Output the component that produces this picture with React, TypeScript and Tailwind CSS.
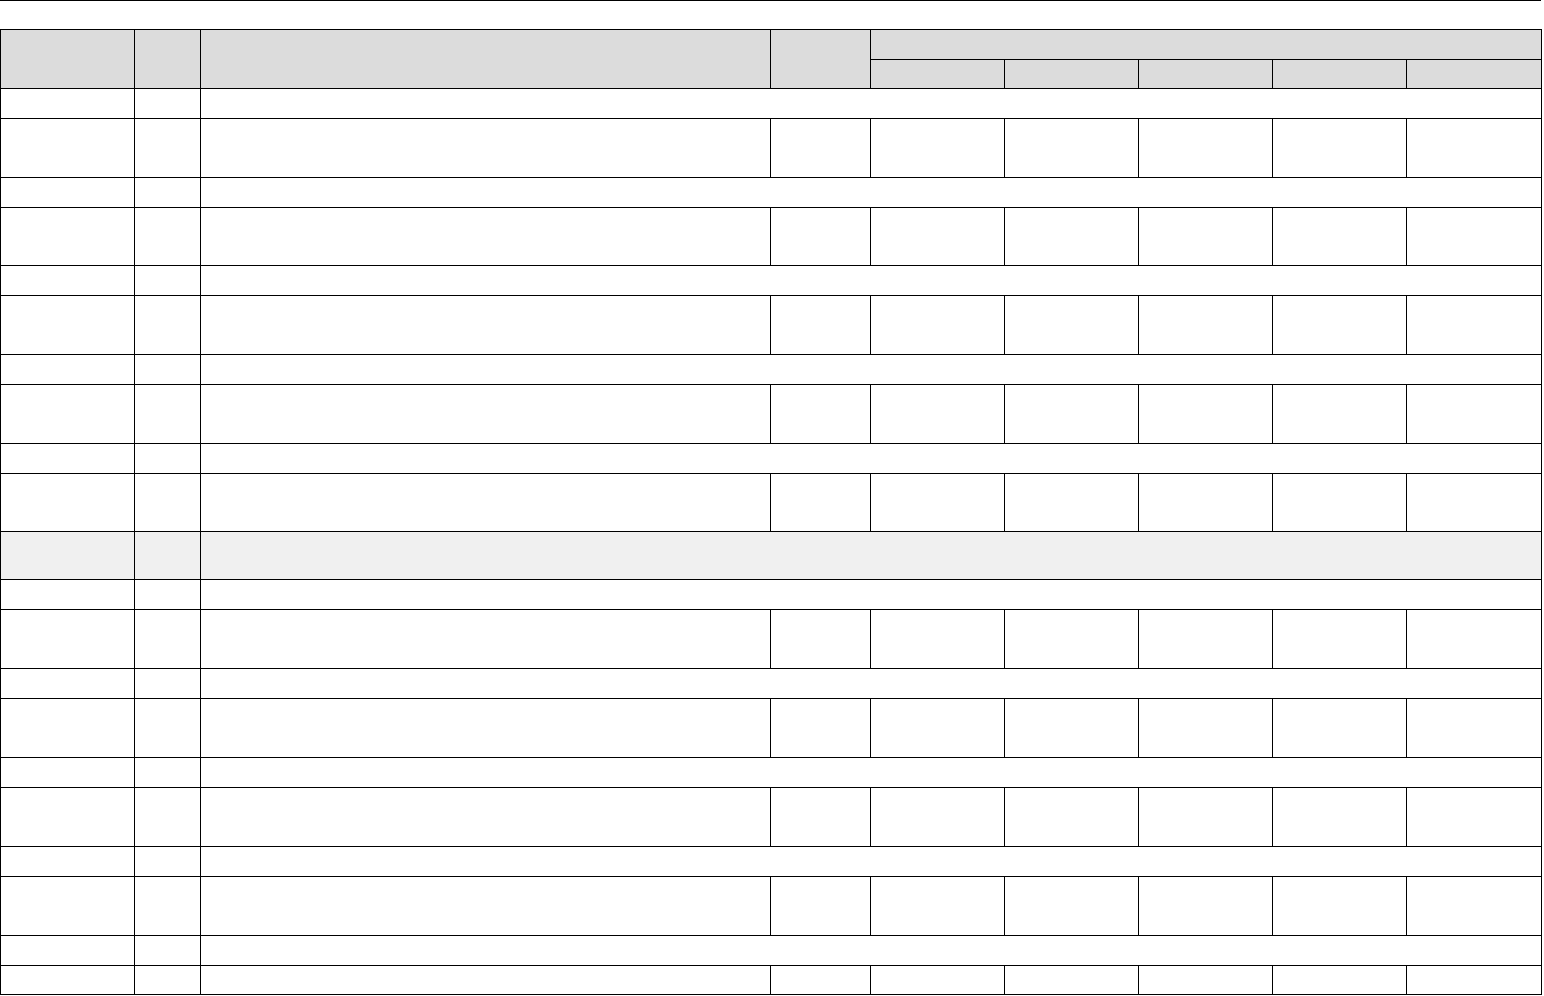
import React from 'react'

// empty grid sheet: header block, alternating label / data rows, one shaded section row
const cell = 'border border-black p-0'

function LabelRow() {
  return (
    <tr className="h-[30px]">
      <td className={cell} />
      <td className={cell} />
      <td className={cell} colSpan={7} />
    </tr>
  )
}

function DataRow({ h = 'h-[59px]' }: { h?: string }) {
  return (
    <tr className={h}>
      {Array.from({ length: 9 }).map((_, i) => (
        <td key={i} className={cell} />
      ))}
    </tr>
  )
}

function Block({ h }: { h?: string }) {
  return (
    <>
      <LabelRow />
      <DataRow h={h} />
    </>
  )
}

export default function App() {
  return (
    <div className="w-[1544px] bg-white" style={{ fontFamily: '"Liberation Sans", Arial, sans-serif' }}>
      <div className="w-[1541px] border-t border-black" />
      <table className="mt-[28px] w-[1541px] table-fixed border-collapse">
        <colgroup>
          <col className="w-[134px]" />
          <col className="w-[66px]" />
          <col className="w-[570px]" />
          <col className="w-[100px]" />
          <col className="w-[134px]" />
          <col className="w-[134px]" />
          <col className="w-[134px]" />
          <col className="w-[134px]" />
          <col className="w-[135px]" />
        </colgroup>
        <thead className="bg-[#dcdcdc]">
          <tr className="h-[30px]">
            <th className={cell} rowSpan={2} />
            <th className={cell} rowSpan={2} />
            <th className={cell} rowSpan={2} />
            <th className={cell} rowSpan={2} />
            <th className={cell} colSpan={5} />
          </tr>
          <tr className="h-[29px]">
            <th className={cell} />
            <th className={cell} />
            <th className={cell} />
            <th className={cell} />
            <th className={cell} />
          </tr>
        </thead>
        <tbody>
          <Block />
          <Block h="h-[58px]" />
          <Block />
          <Block />
          <Block h="h-[58px]" />
          <tr className="h-[48px] bg-[#f0f0f0]">
            <td className={cell} />
            <td className={cell} />
            <td className={cell} colSpan={7} />
          </tr>
          <Block />
          <Block />
          <Block />
          <Block />
          <LabelRow />
          <DataRow h="h-[29px]" />
        </tbody>
      </table>
    </div>
  )
}
